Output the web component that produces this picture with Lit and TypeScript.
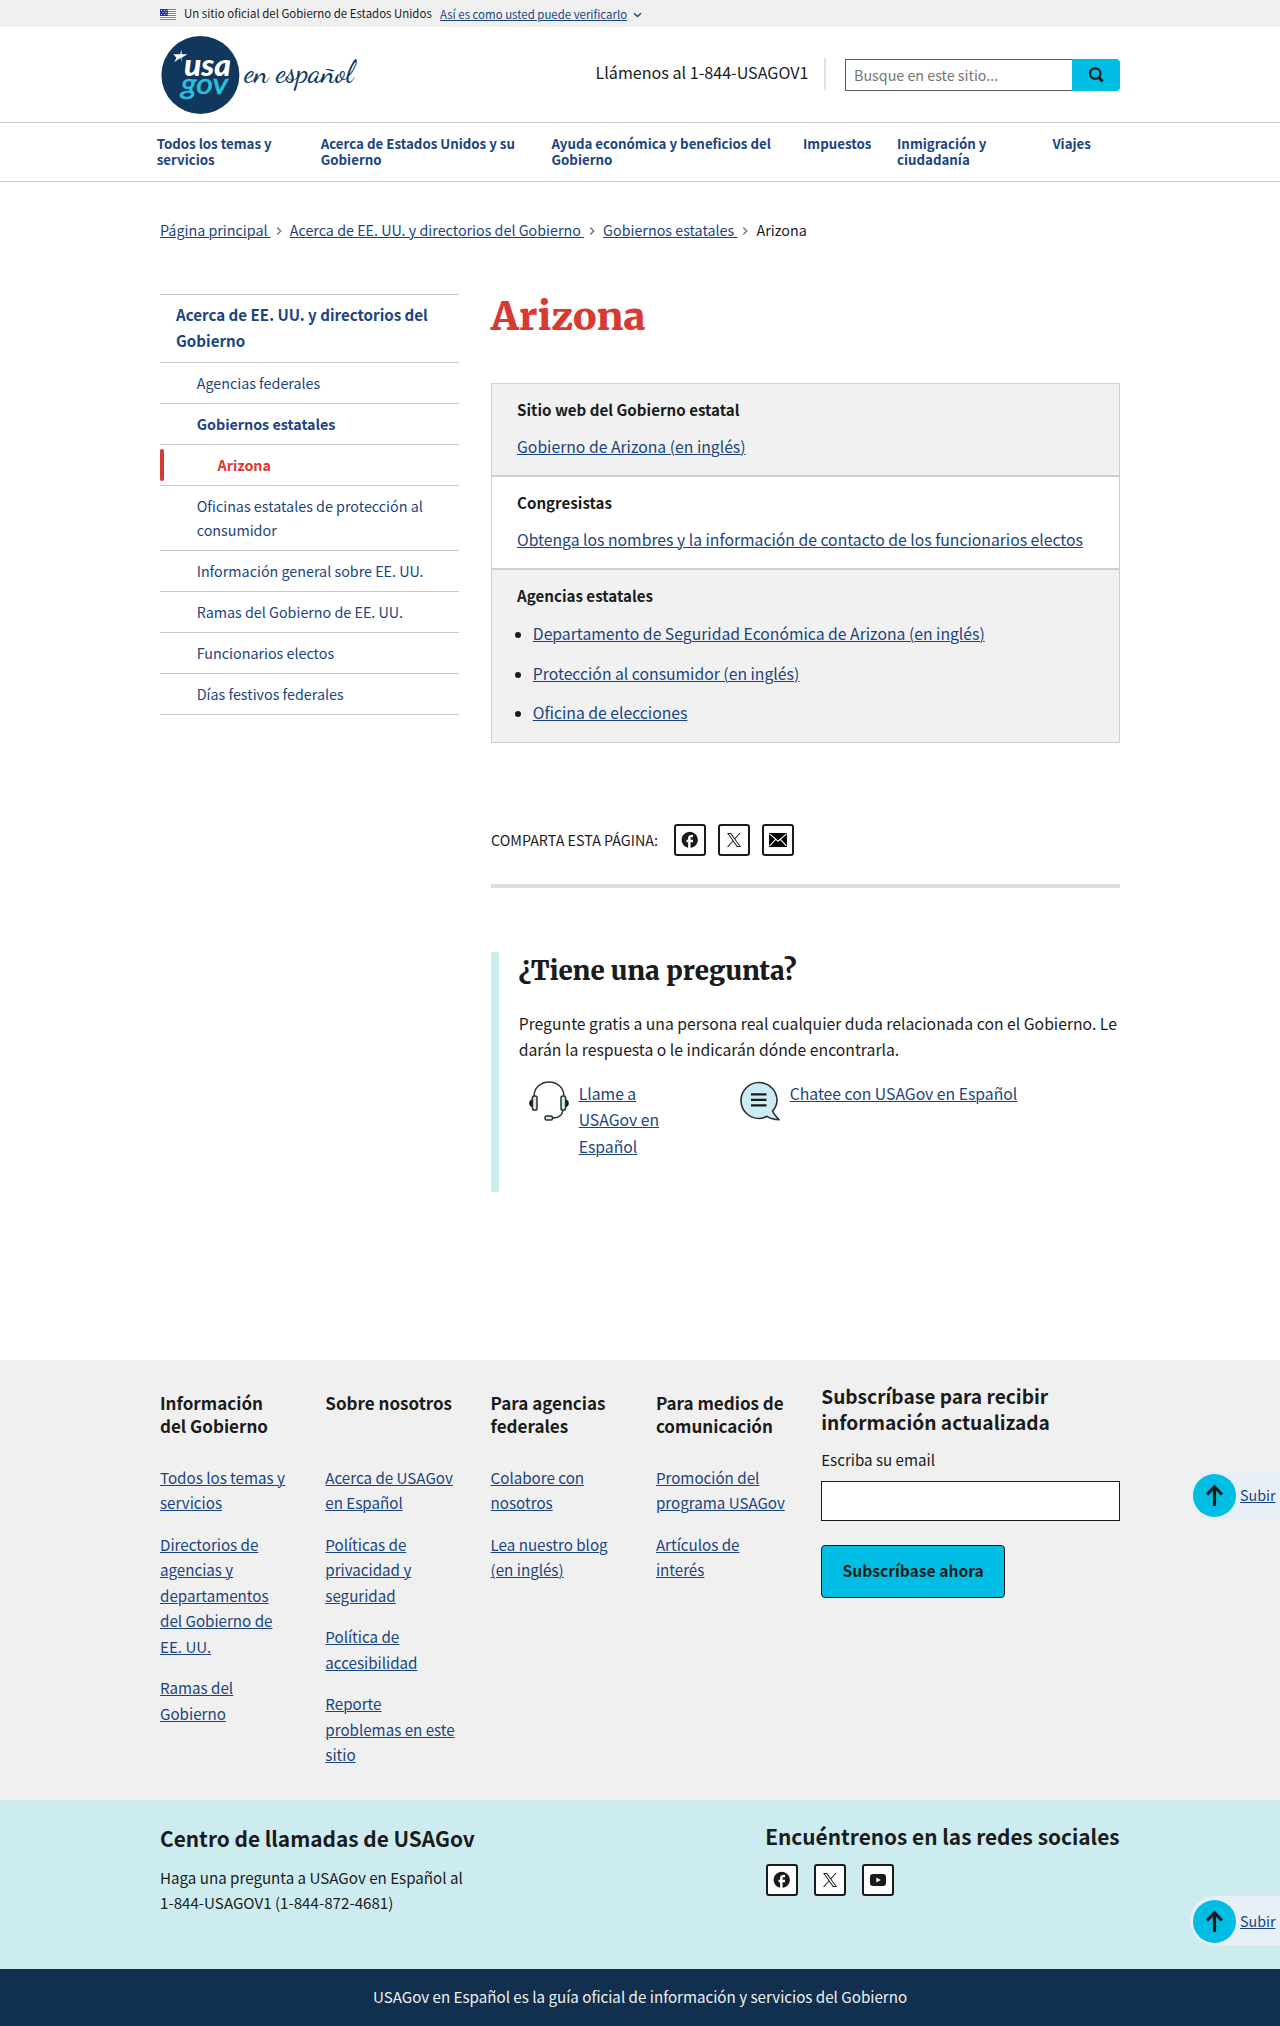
import { LitElement, html, css, svg } from "lit";

const facebook = html`<svg class="ic20" viewBox="0 0 24 24" fill="#1b1b1b"><path d="M22 12c0-5.52-4.48-10-10-10S2 6.48 2 12c0 4.84 3.44 8.87 8 9.8V15H8v-3h2V9.5C10 7.57 11.57 6 13.5 6H16v3h-2c-.55 0-1 .45-1 1v2h3v3h-3v6.95c5.05-.5 9-4.76 9-9.95z"/></svg>`;
const xLogo = html`<svg class="ic14" viewBox="0 0 24 24" fill="#1b1b1b"><path d="M14.258 10.152L23.176 0h-2.113l-7.747 8.813L7.133 0H0l9.352 13.328L0 23.973h2.113l8.176-9.309 6.531 9.309h7.133zm-2.895 3.293l-.949-1.328L2.875 1.56h3.246l6.086 8.523.945 1.328 7.91 11.078h-3.246z"/></svg>`;
const mail = html`<svg width="18" height="14" viewBox="0 0 18 14"><rect width="18" height="14" fill="#000"/><path d="M.6.8 9 8.2 17.4.8M.6 12.8 6.4 6.6M17.4 12.8 11.6 6.6" fill="none" stroke="#fff" stroke-width="1.1"/></svg>`;
const youtube = html`<svg width="16" height="12" viewBox="0 0 16 12"><rect width="16" height="12" rx="3" fill="#1b1b1b"/><path d="M6.3 3.4v5.2L10.8 6z" fill="#fff"/></svg>`;
const chevron = html`<svg class="chev" width="19" height="10" viewBox="0 0 19 10"><path d="M6.3 1.6 9.7 5 6.3 8.4" fill="none" stroke="#71767a" stroke-width="1.4"/></svg>`;

const nav = ["Todos los temas y servicios", "Acerca de Estados Unidos y su Gobierno", "Ayuda económica y beneficios del Gobierno", "Impuestos", "Inmigración y ciudadanía", "Viajes"];
const crumbs = ["Página principal ", "Acerca de EE. UU. y directorios del Gobierno ", "Gobiernos estatales "];
const side: [string, string][] = [
  ["Acerca de EE. UU. y directorios del Gobierno", "top"],
  ["Agencias federales", ""],
  ["Gobiernos estatales", "bold"],
  ["Arizona", "current"],
  ["Oficinas estatales de protección al consumidor", ""],
  ["Información general sobre EE. UU.", ""],
  ["Ramas del Gobierno de EE. UU.", ""],
  ["Funcionarios electos", ""],
  ["Días festivos federales", ""],
];
const columns: [string, string[]][] = [
  ["Información del Gobierno", ["Todos los temas y servicios", "Directorios de agencias y departamentos del Gobierno de EE. UU.", "Ramas del Gobierno"]],
  ["Sobre nosotros", ["Acerca de USAGov en Español", "Políticas de privacidad y seguridad", "Política de accesibilidad", "Reporte problemas en este sitio"]],
  ["Para agencias federales", ["Colabore con nosotros", "Lea nuestro blog (en inglés)"]],
  ["Para medios de comunicación", ["Promoción del programa USAGov", "Artículos de interés"]],
];

const flag = html`<svg width="16" height="11" viewBox="0 0 16 11"><rect width="16" height="11" fill="#fff"/>
  ${[0, 2, 4, 6, 8, 10].map((y) => svg`<rect y=${y} width="16" height="1" fill="#db3e1f" opacity=".85"/>`)}
  <rect width="8" height="7" fill="#1e33b1"/>
  ${[[1, 1], [4, 1], [6.5, 1], [2.5, 3], [5.5, 3], [1, 5], [4, 5], [6.5, 5]].map(([x, y]) => svg`<rect x=${x} y=${y} width="1" height="1" fill="#fff" opacity=".85"/>`)}</svg>`;

const logo = html`<svg class="logo" width="200" height="82" viewBox="0 0 200 82">
  <circle cx="40.4" cy="40" r="39" fill="#12375c"/>
  <path d="M13.2 19.3h6.6l2-4.3.3 4.3h5.4l-6 3.5-2.3 1-5 3.4 2.3-4.5z" fill="#fff"/>
  <path d="M20.2 19 21.8 15l.3 4.2zM20.5 23.3l1.8-1.2-.4 5.2z" fill="#2bc0df"/>
  <text><tspan class="usa" x="24" y="41" textLength="47" lengthAdjust="spacingAndGlyphs">usa</tspan><tspan class="gov" x="21" y="58.5" textLength="47" lengthAdjust="spacingAndGlyphs">gov</tspan></text>
  <text class="script" x="84.500" y="47" textLength="109" lengthAdjust="spacingAndGlyphs">en español</text>
</svg>`;

const headset = html`<svg class="ico" width="40" height="40" viewBox="0 0 40 40" fill="none" stroke="#2d2e2f" stroke-width="1.5">
  <path d="M5 15.5C5 7 11.5 1 20 1s15 6 15 14.5"/>
  <path d="M3 18.5C-.8 19-.8 25.5 3 26zM37 18.5c3.8.5 3.8 7 0 7.5z" fill="#1b1b1b" stroke="none"/>
  <rect x="3.4" y="15" width="4.6" height="14" rx="1.8" fill="#ceebf2"/>
  <rect x="32" y="15" width="4.6" height="14" rx="1.8" fill="#ceebf2"/>
  <path d="M34 29c-.5 5-4.5 8-10 8"/>
  <rect x="16" y="35" width="7.5" height="4" rx="1.6" fill="#ceebf2"/></svg>`;
const chat = html`<svg class="ico" width="40" height="40" viewBox="0 0 40 40">
  <path d="M32.5 30C35.3 27 37 23 37 19A18 18 0 1 0 19 37.5c3 0 5.600-.8 8-2.200 3 2 7 3.300 12 3.300-2.500-2.500-5-5-6.500-8.600z" fill="#cdebf5" stroke="#2d2e2f" stroke-width="1.6" stroke-linejoin="round"/>
  <path d="M11 13.3h15.5M11 18.8h15.5M11 24.3h15.5" stroke="#1b1b1b" stroke-width="2.3"/></svg>`;

const up = (cls: string) => html`<a class="up ${cls}"><svg width="43" height="43" viewBox="0 0 43 43"><circle cx="21.5" cy="21.5" r="21.5" fill="#00bde3"/><path d="M21.5 32V13M14 20.5l7.5-7.6 7.5 7.6" fill="none" stroke="#1b1b1b" stroke-width="3.2"/></svg><span>Subir</span></a>`;

class AppRoot extends LitElement {
  static styles = css`
    :host { display: block; position: relative; height: 2026px; overflow: hidden; background: #fff; color: #1b1b1b; font-family: "Noto Sans CJK JP", "Noto Sans", sans-serif; font-size: 15.74px; }
    * { box-sizing: border-box; }
    h1, h2, h3, p, ul { margin: 0; padding: 0; }
    ul { list-style: none; }
    a { color: #1a4480; text-decoration: underline; text-decoration-thickness: 1px; text-underline-offset: 1px; }
    .wrap { width: 960px; margin: 0 auto; }
    .banner { background: #f0f0f0; height: 27px; font-size: 11.45px; }
    .banner .wrap { display: flex; align-items: flex-start; }
    .banner .wrap > svg { margin-top: 9px; }
    .banner span { line-height: 26px; margin-left: 8px; width: 256px; white-space: nowrap; }
    .banner a { line-height: 28px; white-space: nowrap; }
    .banner .wrap > svg.down { margin: 12px 0 0 6px; }
    .head { display: flex; height: 95px; }
    .logo { margin-top: 8px; flex: none; }
    .usa { font: italic 900 30px Lato, sans-serif; fill: #fff; }
    .gov { font: italic 400 28px Lato, sans-serif; fill: #2bc0df; stroke: #2bc0df; stroke-width: .6; }
    .script { font: 500 31px "Dancing Script", "Liberation Serif", serif; fill: #12375c; }
    .phone { margin: 31px 0 0 auto; height: 32px; width: 230.5px; line-height: 28px; font-size: 16.12px; border-right: 2px solid #dfe1e2; white-space: nowrap; }
    .search { display: flex; margin: 32px 0 0 19px; width: 275px; height: 32px; }
    .field { width: 227px; border: 1px solid #565c65; border-right: 0; padding-left: 8px; font-size: 14.3px; line-height: 30px; color: #757575; }
    .go { width: 48px; background: #00bde3; border-radius: 0 4px 4px 0; display: flex; align-items: center; justify-content: center; }
    .nav { height: 60px; border-top: 1px solid #c9c9c9; border-bottom: 1px solid #c9c9c9; padding: 13px 0 0 156.7px; display: grid; grid-template-columns: 164px 230.8px 251.5px 94px 155.4px auto; font-weight: 700; font-size: 13.3px; line-height: 16px; color: #1a4480; }
    .nav span { padding-right: 20px; }
    .crumbs { display: flex; align-items: center; margin-top: 35px; height: 25px; line-height: 25px; font-size: 14.32px; white-space: pre; }
    .chev { margin-top: 3px; }
    .body { margin-top: 52px; display: grid; grid-template-columns: 299px 629px; gap: 32px; align-items: start; }
    .side { border-bottom: 1px solid #c9c9c9; color: #1a4480; font-size: 14.32px; line-height: 24px; }
    .side li { border-top: 1px solid #c9c9c9; padding: 7.5px 20px 8.5px 36.7px; }
    .side .top { font-weight: 700; font-size: 15.13px; line-height: 26px; padding: 6px 20px 9px 16px; }
    .side .bold { font-weight: 700; }
    .side .current { font-weight: 700; color: #d83933; padding: 4px 0; display: flex; }
    .side .current::before { content: ""; width: 4px; height: 32px; border-radius: 2px; background: #d83933; margin-right: 53.5px; }
    .side .current span { padding-top: 3.5px; }
    h1 { font: 900 39px/46px Merriweather, "Noto Serif", serif; color: #d83933; }
    .boxes { margin-top: 43px; }
    .box { border: 1px solid #cfcfcf; padding: 13px 25px 0; height: 93px; line-height: 24px; }
    .box h3 { font-size: 15.13px; font-weight: 700; line-height: 24px; margin-bottom: 13.5px; }
    .box.gray { background: #f1f1f1; }
    .box.tall { height: 174px; }
    .box.tall h3 { margin-bottom: 15px; }
    .box li { display: flex; align-items: center; margin-bottom: 15.5px; }
    .box li::before { content: ""; width: 6px; height: 6px; border-radius: 3px; background: #1b1b1b; margin: 2px 12px 0 -2.2px; }
    .share { display: flex; gap: 12px; margin-top: 81px; align-items: center; font-size: 14.32px; }
    .share span { width: 171px; white-space: nowrap; padding-bottom: 2px; }
    .sq { width: 32px; height: 32px; border: 2px solid #1b1b1b; border-radius: 3px; background: #fff; display: flex; align-items: center; justify-content: center; }
    .ic20 { width: 19.5px; height: 19.5px; } .ic14 { width: 14px; height: 14px; }
    .rule { height: 4px; background: #dfdfdf; margin-top: 28px; }
    .ask { margin-top: 64px; height: 240px; border-left: 8px solid #cdecf0; padding-left: 19.7px; }
    .ask h2 { font: 900 25.8px/39px Merriweather, "Noto Serif", serif; margin-bottom: 19.5px; }
    .ask p { line-height: 26px; width: 604px; }
    .ways { display: grid; grid-template-columns: 211px 1fr; margin: 18px 0 0 10px; line-height: 26.5px; }
    .way { display: flex; gap: 10px; }
    .way a { width: 92px; } .way a.wide { width: auto; }
    .ico { flex: none; margin-top: .5px; }
    .foot { margin-top: 168px; height: 440px; background: #f0f0f0; }
    .foot .wrap { display: grid; grid-template-columns: repeat(4, 165.3px) 298.8px; }
    .col { padding-top: 31px; width: 131.6px; font-size: 15.15px; line-height: 25.44px; }
    .col h3 { font-size: 17.05px; line-height: 23px; min-height: 46px; margin-bottom: 28px; }
    .col:first-child h3 { padding-right: 6px; }
    .col:first-child ul { padding-right: 4px; }
    .col li { margin-bottom: 16px; }
    .sub { padding-top: 22.5px; }
    .sub h2 { font-size: 19.16px; line-height: 26px; width: 250px; }
    .sub label { display: block; font-size: 15.13px; line-height: 24px; margin: 12.5px 0 10px; }
    .email { height: 40px; background: #fff; border: 1px solid #1b1b1b; }
    .btn { margin-top: 24px; width: 184px; height: 53px; line-height: 50px; text-align: center; font-weight: 700; font-size: 15.65px; background: #00bde3; border: 1px solid #1b1b1b; border-radius: 4px; }
    .call { background: #cdecf0; height: 169px; }
    .call .wrap { display: flex; justify-content: space-between; }
    .call h2 { font-size: 20.84px; line-height: 28px; white-space: nowrap; }
    .left { padding-top: 24px; } .left p { margin-top: 12.6px; font-size: 15.15px; line-height: 25.4px; }
    .right { padding-top: 22px; width: 354.8px; }
    .social { display: flex; gap: 16px; margin: 14px 0 0 1px; }
    .end { height: 57px; background: #112f4e; color: #f0f0f0; text-align: center; font-size: 15.15px; line-height: 54px; }
    .up { position: absolute; left: 1190px; width: 90px; height: 50px; border-radius: 25px 0 0 25px; background: #e7eff7; display: flex; align-items: center; padding-left: 3px; font-size: 14.29px; text-decoration: none; }
    .up span { margin: 0 0 1.5px 4px; text-decoration: underline; text-decoration-thickness: 1px; text-underline-offset: 1px; }
    .one { top: 1470px; } .two { top: 1896px; }
  `;
  render() {
    return html`
      <div class="banner"><div class="wrap">${flag}<span>Un sitio oficial del Gobierno de Estados Unidos</span><a>Así es como usted puede verificarlo</a>
        <svg class="down" width="9" height="6" viewBox="0 0 9 6"><path d="M1 1.2 4.5 4.6 8 1.2" fill="none" stroke="#1a4480" stroke-width="1.4"/></svg></div></div>
      <div class="wrap head">${logo}
        <div class="phone">Llámenos al 1-844-USAGOV1</div>
        <div class="search"><div class="field">Busque en este sitio...</div><div class="go">
          <svg width="16" height="16" viewBox="0 0 16 16" fill="none" stroke="#1b1b1b"><circle cx="7.2" cy="6.6" r="5.2" stroke-width="2.3"/><path d="M10.6 10.3 14.6 14.4" stroke-width="3"/></svg></div></div>
      </div>
      <div class="nav">${nav.map((n) => html`<span>${n}</span>`)}</div>
      <div class="wrap crumbs">${crumbs.map((c) => html`<a>${c}</a>${chevron}`)}<span>Arizona</span></div>
      <div class="wrap body">
        <ul class="side">${side.map(([t, c]) => html`<li class=${c}><span>${t}</span></li>`)}</ul>
        <div>
          <h1>Arizona</h1>
          <div class="boxes">
            <div class="box gray"><h3>Sitio web del Gobierno estatal</h3><a>Gobierno de Arizona (en inglés)</a></div>
            <div class="box"><h3>Congresistas</h3><a>Obtenga los nombres y la información de contacto de los funcionarios electos</a></div>
            <div class="box gray tall"><h3>Agencias estatales</h3><ul>
              <li><a>Departamento de Seguridad Económica de Arizona (en inglés)</a></li>
              <li><a>Protección al consumidor (en inglés)</a></li>
              <li><a>Oficina de elecciones</a></li></ul></div>
          </div>
          <div class="share"><span>COMPARTA ESTA PÁGINA:</span><div class="sq">${facebook}</div><div class="sq">${xLogo}</div><div class="sq">${mail}</div></div>
          <div class="rule"></div>
          <div class="ask"><h2>¿Tiene una pregunta?</h2>
            <p>Pregunte gratis a una persona real cualquier duda relacionada con el Gobierno. Le darán la respuesta o le indicarán dónde encontrarla.</p>
            <div class="ways"><div class="way">${headset}<a>Llame a USAGov en Español</a></div><div class="way">${chat}<a class="wide">Chatee con USAGov en Español</a></div></div>
          </div>
        </div>
      </div>
      <div class="foot"><div class="wrap">
        ${columns.map(([h, ls]) => html`<div class="col"><h3>${h}</h3><ul>${ls.map((l) => html`<li><a>${l}</a></li>`)}</ul></div>`)}
        <div class="sub"><h2>Subscríbase para recibir información actualizada</h2><label>Escriba su email</label><div class="email"></div><div class="btn">Subscríbase ahora</div></div>
      </div></div>
      <div class="call"><div class="wrap">
        <div class="left"><h2>Centro de llamadas de USAGov</h2><p>Haga una pregunta a USAGov en Español al<br>1-844-USAGOV1 (1-844-872-4681)</p></div>
        <div class="right"><h2>Encuéntrenos en las redes sociales</h2><div class="social"><div class="sq">${facebook}</div><div class="sq">${xLogo}</div><div class="sq">${youtube}</div></div></div>
      </div></div>
      <div class="end">USAGov en Español es la guía oficial de información y servicios del Gobierno</div>
      ${up("one")}${up("two")}`;
  }
}
customElements.define("app-root", AppRoot);
